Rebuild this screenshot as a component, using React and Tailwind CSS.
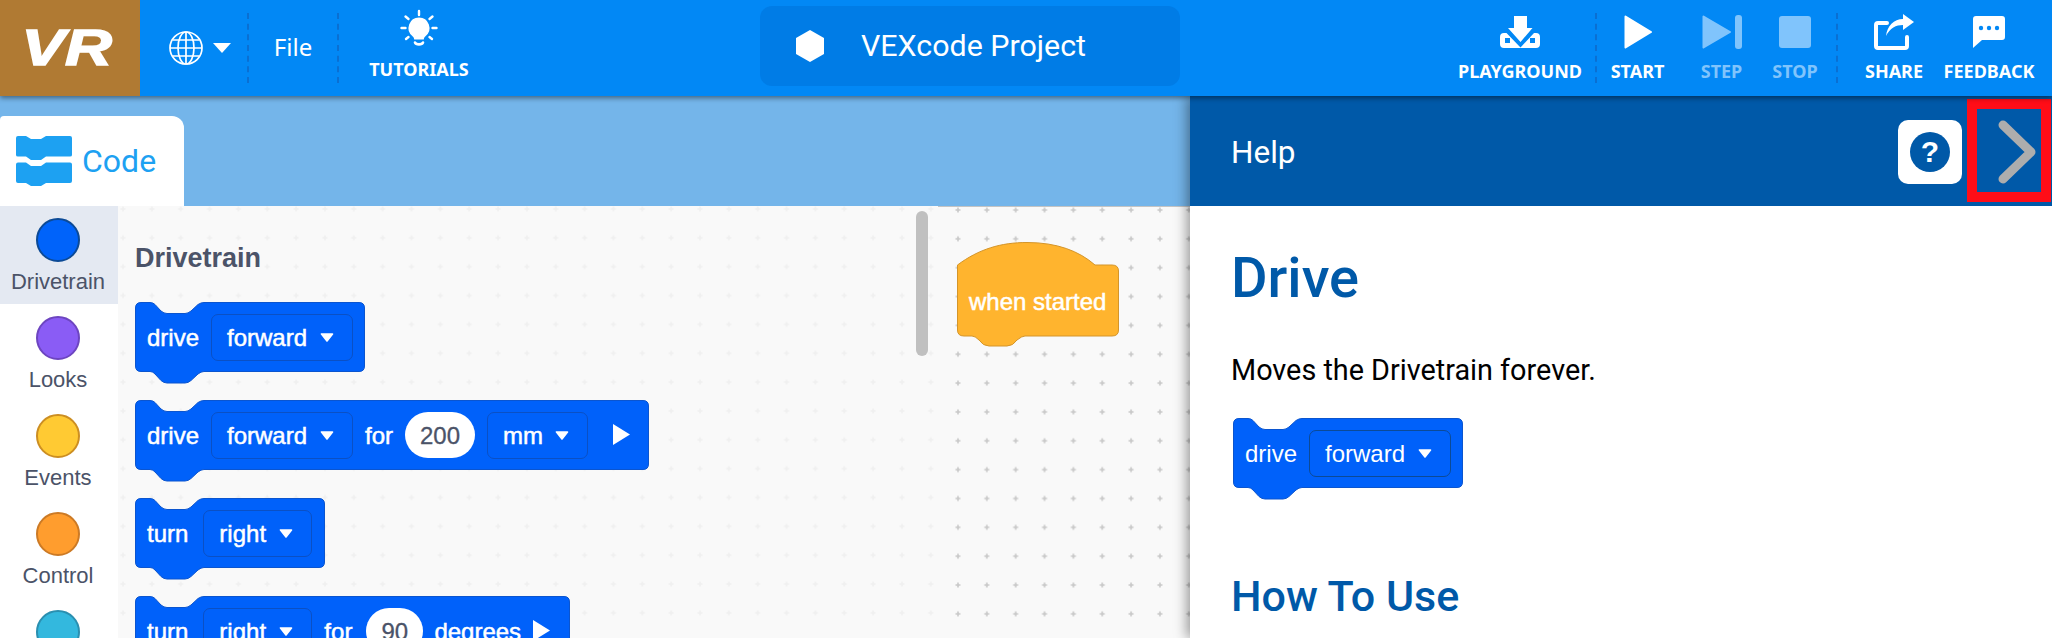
import React from "react";

const SANS = "font-['Liberation_Sans',sans-serif]";
const NOTO = "font-['Noto_Sans',sans-serif]";
const ROBOTO = "font-['Roboto',sans-serif]";

function Caret({ className = "" }) {
  return (
    <svg viewBox="0 0 14 9" className={`w-[14px] h-[9px] shrink-0 ${className}`}>
      <path d="M1.5 1h11L7 8z" fill="#fff" stroke="#fff" strokeWidth="1.6" strokeLinejoin="round" />
    </svg>
  );
}

function blockPath(w, h = 70) {
  const r = 6;
  return `M0.5 ${r}Q0.5 0.5 ${r} 0.5H15Q18 0.5 20 2.5L26 9Q29 11.5 32 11.5H50Q53 11.5 56 9L63 2.5Q66 0.5 69 0.5H${w - r}Q${w - 0.5} 0.5 ${w - 0.5} ${r}V${h - r}Q${w - 0.5} ${h - 0.5} ${w - r} ${h - 0.5}H69Q66 ${h - 0.5} 63 ${h + 2}L56 ${h + 8.5}Q53 ${h + 11} 50 ${h + 11}H32Q29 ${h + 11} 26 ${h + 8.5}L20 ${h + 2}Q18 ${h - 0.5} 15 ${h - 0.5}H${r}Q0.5 ${h - 0.5} 0.5 ${h - r}Z`;
}

function Block({ w, widthClass, children, weighted = true }) {
  return (
    <div className={`relative h-[70px] shrink-0 ${widthClass}`}>
      <svg className="absolute left-0 top-0 overflow-visible" width={w} height="82">
        <path d={blockPath(w)} fill="#0061fa" stroke="#0b55cf" strokeWidth="1" />
      </svg>
      <div className={`relative h-full flex items-center gap-3 pl-3 pt-[2px] text-white text-[24px] leading-none whitespace-nowrap ${SANS} ${weighted ? "[-webkit-text-stroke:0.5px_#fff]" : ""}`}>
        {children}
      </div>
    </div>
  );
}

function Drop({ label, widthClass, border = "border-[#0b50c4]" }) {
  return (
    <div className={`h-[47px] -mt-[2px] border ${border} rounded-[7px] flex items-center justify-between pl-[15px] pr-[18px] ${widthClass}`}>
      <span className="pt-[2px]">{label}</span>
      <Caret />
    </div>
  );
}

function Pill({ value, widthClass }) {
  return (
    <div className={`h-[46px] -mt-[2px] rounded-full bg-white text-[#4b5368] flex items-center justify-center [-webkit-text-stroke:0.3px_#4b5368] ${widthClass}`}>
      <span className="pt-[2px]">{value}</span>
    </div>
  );
}

function Tri() {
  return (
    <svg viewBox="0 0 17 21" className="w-[17px] h-[21px] shrink-0 -mt-[3px]">
      <path d="M0 0 17 10.5 0 21z" fill="#fff" />
    </svg>
  );
}

function Dots({ id, x, y, color }) {
  return (
    <svg className="absolute inset-0 w-full h-full">
      <defs>
        <pattern id={id} x={x} y={y} width="28.85" height="28.85" patternUnits="userSpaceOnUse">
          <path d="M3 0.5V5.5M0.5 3H5.5" stroke={color} strokeWidth="1.6" />
        </pattern>
      </defs>
      <rect width="100%" height="100%" fill={`url(#${id})`} />
    </svg>
  );
}

function Divider() {
  return <div className="h-[70px] border-l-2 border-dashed border-[#0a6fd2] shrink-0" />;
}

function Tool({ label, icon, widthClass, disabled }) {
  return (
    <div className={`h-full flex flex-col items-center pt-[14px] shrink-0 ${widthClass}`}>
      <div className="h-[36px] flex items-center justify-center">{icon}</div>
      <div className={`mt-[11px] text-[18px] leading-[20px] font-bold whitespace-nowrap ${NOTO} ${disabled ? "text-[#80c4fc]" : "text-white"}`}>{label}</div>
    </div>
  );
}

function Cat({ label, fill, border, active }) {
  return (
    <div className={`h-[98px] pr-[2px] flex flex-col items-center pt-3 shrink-0 ${active ? "bg-[#e4e9f2]" : ""}`}>
      <div className={`w-[44px] h-[44px] shrink-0 rounded-full border-2 ${fill} ${border}`} />
      {label && <div className={`mt-[7px] text-[22px] leading-[26px] text-[#4b5368] ${SANS}`}>{label}</div>}
    </div>
  );
}

export default function App() {
  return (
    <div className="w-[2052px] h-[638px] overflow-hidden flex flex-col bg-white">
      {/* Top bar */}
      <header className="relative z-20 h-[96px] shrink-0 flex bg-[#0288f5] shadow-[0_2px_5px_rgba(0,0,0,0.45)]">
        <div className="w-[760px] flex items-center shrink-0">
          <div className="w-[140px] h-full bg-[#b07a33] flex items-center justify-center shrink-0">
            <span className={`-ml-[6px] text-[50px] leading-none italic font-bold text-white scale-x-[1.3] [-webkit-text-stroke:1.5px_#fff] ${SANS}`}>VR</span>
          </div>
          <div className="w-[107px] flex items-center pl-[29px] gap-[10px] shrink-0">
            <svg viewBox="0 0 34 34" className="w-[34px] h-[34px]" fill="none" stroke="#fff" strokeWidth="1.7">
              <circle cx="17" cy="17" r="16" />
              <ellipse cx="17" cy="17" rx="8" ry="16" />
              <path d="M17 1V33M1 17H33M3.5 9H30.5M3.5 25H30.5" />
            </svg>
            <svg viewBox="0 0 18 10" className="w-[18px] h-[10px]"><path d="M0 0H18L9 10z" fill="#fff" /></svg>
          </div>
          <Divider />
          <div className={`w-[88px] -mt-[2px] text-center text-white text-[24px] leading-none shrink-0 ${NOTO}`}>File</div>
          <Divider />
          <div className="w-[160px] h-full flex flex-col items-center pt-[9px] shrink-0">
            <svg viewBox="0 0 38 38" className="w-[38px] h-[38px]" fill="none" stroke="#fff" strokeWidth="2.4" strokeLinecap="round">
              <path d="M19 2V6M5.5 7.5 8.5 10M32.5 7.5 29.5 10M1.5 19H5.5M32.5 19H36.5M6 30 8.5 28M32 30 29.5 28" />
              <path d="M19 8.5a10.5 10.5 0 0 0-6.5 18.7c1.2 1 1.600 2 1.700 3.300h9.600c.1-1.300.5-2.300 1.700-3.300A10.500 10.500 0 0 0 19 8.500z" fill="#fff" stroke="none" />
              <path d="M15 33.500c1 2.500 7 2.500 8 0" strokeWidth="2.6" />
            </svg>
            <div className={`mt-[12px] text-[18px] leading-[20px] font-bold text-white whitespace-nowrap ${NOTO}`}>TUTORIALS</div>
          </div>
        </div>
        <div className="w-[420px] h-[80px] mt-[6px] shrink-0 rounded-[12px] bg-[#007ce6] flex items-center pl-[36px] gap-[37px]">
          <svg viewBox="0 0 28 32" className="w-[28px] h-[32px]"><path d="M14 0 28 8V24L14 32 0 24V8z" fill="#fff" /></svg>
          <span className={`text-white text-[30.4px] leading-none ${ROBOTO}`}>VEXcode Project</span>
        </div>
        <div className="flex-1 flex items-center pl-[268px]">
          <Tool widthClass="w-[144px] mr-[3px]" label="PLAYGROUND" icon={
            <svg viewBox="0 0 40 32" className="w-[40px] h-[32px]">
              <path d="M14 0H27V12H32.500L20.500 26 8 12H14z" fill="#fff" />
              <path d="M4 17H6.500L20.500 31.500 34 17H36Q40 17 40 21V28Q40 32 36 32H4Q0 32 0 28V21Q0 17 4 17z" fill="#fff" />
              <rect x="5" y="22" width="5" height="5" fill="#0288f5" />
              <rect x="30" y="22" width="5" height="5" fill="#0288f5" />
            </svg>} />
          <Divider />
          <Tool widthClass="w-[81px]" label="START" icon={
            <svg viewBox="0 0 28 34" className="w-[28px] h-[34px]"><path d="M1.500 1.500 27 17 1.500 32.500z" fill="#fff" stroke="#fff" strokeWidth="2" strokeLinejoin="round" /></svg>} />
          <Tool widthClass="w-[87px]" disabled label="STEP" icon={
            <svg viewBox="0 0 40 34" className="w-[40px] h-[34px]"><path d="M1.500 1.500 28 17 1.500 32.500z" fill="#80c4fc" stroke="#80c4fc" strokeWidth="2" strokeLinejoin="round" /><rect x="33" y="0" width="7" height="34" rx="3" fill="#80c4fc" /></svg>} />
          <Tool widthClass="w-[60px] mr-[11px]" disabled label="STOP" icon={<div className="w-[32px] h-[32px] rounded-[3px] bg-[#80c4fc]" />} />
          <Divider />
          <Tool widthClass="w-[100px] ml-[6px]" label="SHARE" icon={
            <svg viewBox="0 0 40 36" className="w-[40px] h-[36px]" fill="none">
              <path d="M13 9H4Q2 9 2 11V32Q2 34 4 34H31Q33 34 33 32V23" stroke="#fff" strokeWidth="4" strokeLinejoin="round" strokeLinecap="round" />
              <path d="M12 22C13 12 20 5 29 5V0L40 8 29 16V11C22 11 16 14 12 22z" fill="#fff" />
            </svg>} />
          <Tool widthClass="w-[90px]" label="FEEDBACK" icon={
            <svg viewBox="0 0 32 32" className="w-[32px] h-[32px]">
              <path d="M3 0H29Q32 0 32 3V21Q32 24 29 24H9L0 32V3Q0 0 3 0z" fill="#fff" />
              <circle cx="8" cy="12" r="2.200" fill="#0288f5" /><circle cx="16" cy="12" r="2.200" fill="#0288f5" /><circle cx="24" cy="12" r="2.200" fill="#0288f5" />
            </svg>} />
        </div>
      </header>

      <div className="flex-1 flex min-h-0">
        {/* Editor */}
        <div className="w-[1190px] shrink-0 flex flex-col">
          <div className="h-[110px] shrink-0 bg-[#74b5ea] flex items-end">
            <div className="w-[184px] h-[90px] bg-white rounded-tr-[12px] rounded-tl-[4px] flex items-center pl-4 gap-[10px]">
              <svg viewBox="0 0 56 50" className="w-[56px] h-[50px]">
                <path d="M2 0H10L15 3H25L30 0H54Q56 0 56 2V19Q56 20.500 54 20.500H30L25 24H15L10 20.500H2Q0 20.500 0 19V2Q0 0 2 0z" fill="#1da1f2" />
                <path d="M2 26.500H10L15 30H25L30 26.500H54Q56 26.500 56 28.500V45Q56 47 54 47H30L25 50H15L10 47H2Q0 47 0 45V28.500Q0 26.500 2 26.500z" fill="#1da1f2" />
              </svg>
              <span className={`text-[32px] leading-none text-[#1da1f2] ${ROBOTO}`}>Code</span>
            </div>
          </div>
          <div className="flex-1 flex min-h-0">
            <div className="w-[118px] shrink-0 flex flex-col bg-white overflow-hidden">
              <Cat active label="Drivetrain" fill="bg-[#0063fa]" border="border-[#0c4a96]" />
              <Cat label="Looks" fill="bg-[#8a5cf5]" border="border-[#6d45c0]" />
              <Cat label="Events" fill="bg-[#ffca33]" border="border-[#cc8e22]" />
              <Cat label="Control" fill="bg-[#ff9d2e]" border="border-[#cc7a25]" />
              <Cat fill="bg-[#33b8de]" border="border-[#2a8fb0]" />
            </div>
            <div className="relative w-[820px] shrink-0 bg-[#f9f9f9] overflow-hidden">
              <Dots id="flyoutDots" x="2" y="0" color="#f0f0f0" />
              <div className="relative flex flex-col pl-[17px] pt-[36px]">
                <div className={`text-[27px] leading-[32px] font-bold text-[#4b5368] mb-[28px] ${SANS}`}>Drivetrain</div>
                <div className="flex flex-col gap-[28px]">
                  <Block w={230} widthClass="w-[230px]">
                    <span>drive</span>
                    <Drop label="forward" widthClass="w-[142px]" />
                  </Block>
                  <Block w={514} widthClass="w-[514px]">
                    <span>drive</span>
                    <Drop label="forward" widthClass="w-[142px]" />
                    <span>for</span>
                    <Pill value="200" widthClass="w-[70px]" />
                    <Drop label="mm" widthClass="w-[101px]" />
                    <div className="ml-[13px]"><Tri /></div>
                  </Block>
                  <Block w={190} widthClass="w-[190px]">
                    <span className="mr-[3px]">turn</span>
                    <Drop label="right" widthClass="w-[109px]" />
                  </Block>
                  <Block w={435} widthClass="w-[435px]">
                    <span className="mr-[3px]">turn</span>
                    <Drop label="right" widthClass="w-[109px]" />
                    <span className="mr-[2px]">for</span>
                    <Pill value="90" widthClass="w-[57px]" />
                    <span className="-ml-[1px]">degrees</span>
                    <Tri />
                  </Block>
                </div>
              </div>
              <div className="absolute left-[798px] top-[5px] w-[12px] h-[145px] rounded-full bg-[#c0c0c0]" />
            </div>
            <div className="relative flex-1 bg-[#f9f9f9] border-t border-[#c4c4c4] overflow-hidden">
              <Dots id="workspaceDots" x="17" y="0" color="#c8c8c8" />
              <div className="relative ml-[19px] mt-[35px] w-[162px] h-[105px]">
                <svg className="absolute inset-0 overflow-visible" width="162" height="105">
                  <path d="M0.500 23C22 7 44 0.500 70 0.500C100 0.500 122 9 138 23H155Q161.500 23 161.500 29V88Q161.500 94 155 94H68Q65 94 60 98Q56 104 50 104H32Q26 104 22 98Q18 94 15 94H7Q0.500 94 0.500 88Z" fill="#ffb42e" stroke="#d4952a" strokeWidth="1" />
                </svg>
                <div className={`absolute left-[12px] top-[46px] text-white text-[24px] leading-[28px] whitespace-nowrap [-webkit-text-stroke:0.5px_#fff] ${SANS}`}>when started</div>
              </div>
            </div>
          </div>
        </div>

        {/* Help panel */}
        <aside className="relative z-10 w-[862px] shrink-0 flex flex-col bg-white shadow-[-3px_0_12px_rgba(0,0,0,0.4)]">
          <div className="h-[110px] shrink-0 bg-[#0059a8] flex items-center justify-between pl-[41px] pr-[1px]">
            <span className={`mt-[3px] text-white text-[31.5px] leading-none ${ROBOTO}`}>Help</span>
            <div className="flex items-start gap-[5px] h-full">
              <div className="w-[64px] h-[64px] mt-[24px] rounded-[10px] bg-white flex items-center justify-center">
                <div className={`w-[40px] h-[40px] rounded-full bg-[#0059a8] flex items-center justify-center text-white text-[30px] leading-none font-bold ${SANS}`}>?</div>
              </div>
              <div className="w-[84px] h-[103px] mt-[3px] border-[10px] border-[#ff0d17] flex items-center">
                <svg viewBox="0 0 38 64" className="w-[38px] h-[64px] ml-[21px] mt-[3px]" fill="none" stroke="#adadad" strokeWidth="9" strokeLinecap="round" strokeLinejoin="round">
                  <path d="M5 5 33 32 5 59" />
                </svg>
              </div>
            </div>
          </div>
          <div className="flex-1 min-h-0 pl-[41px] overflow-hidden">
            <h1 className={`mt-[42px] text-[56px] leading-[60px] font-medium text-[#0059a8] ${ROBOTO}`}>Drive</h1>
            <p className={`mt-[45px] text-[28.8px] leading-[34px] text-black ${ROBOTO}`}>Moves the Drivetrain forever.</p>
            <div className="mt-[31px] mb-[83px] ml-[2px]">
              <Block w={230} widthClass="w-[230px]" weighted={false}>
                <span>drive</span>
                <Drop label="forward" widthClass="w-[142px]" border="border-[#0c4a96]" />
              </Block>
            </div>
            <h2 className={`text-[43px] leading-[50px] font-medium text-[#0059a8] ${ROBOTO}`}>How To Use</h2>
          </div>
        </aside>
      </div>
    </div>
  );
}
